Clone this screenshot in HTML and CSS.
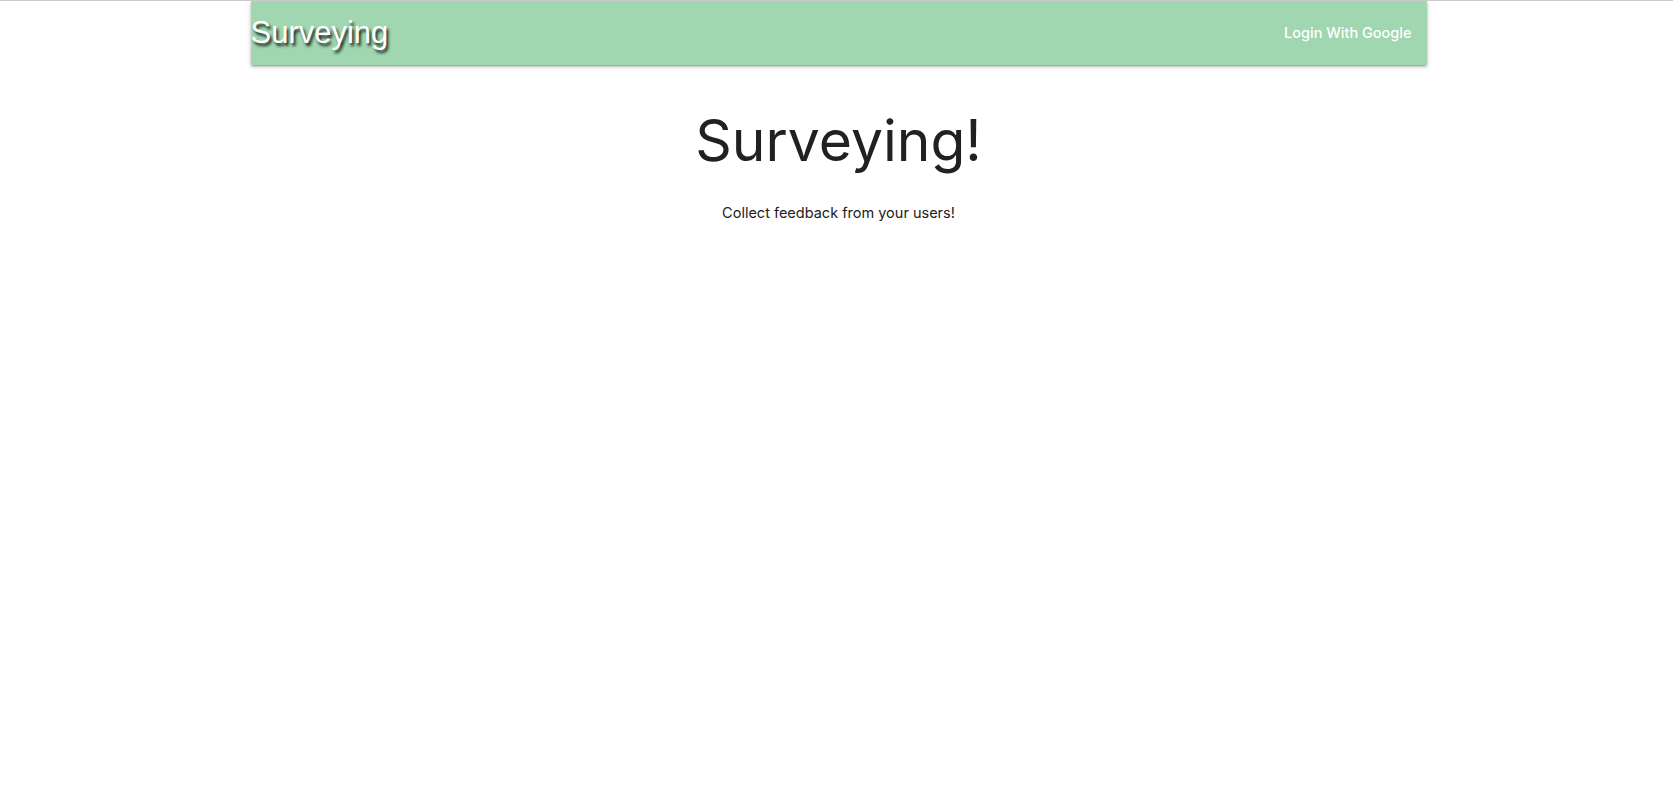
FILE: index.html
```html
<!DOCTYPE html>
<html lang="en">
<head>
<meta charset="utf-8">
<title>Surveying</title>
<link rel="stylesheet" href="styles.css">
</head>
<body>
<div class="page">
  <header class="container">
    <nav class="nav">
      <a class="brand" href="#">Surveying</a>
      <ul class="nav-links">
        <li><a href="#">Login With Google</a></li>
      </ul>
    </nav>
  </header>
  <main class="container landing">
    <h1 class="title">Surveying!</h1>
    <p class="subtitle">Collect feedback from your users!</p>
  </main>
</div>
</body>
</html>
```

FILE: styles.css
```css
* { box-sizing: border-box; }
html, body { margin: 0; padding: 0; }
body {
  font-family: Inter, "Noto Sans", sans-serif;
  color: rgba(0, 0, 0, 0.87);
  background: #ffffff;
  border-top: 1px solid #c9c9c9;
  min-height: 798px;
}
.page {
  padding-left: 4px;
}
.container {
  width: 1176px;
  margin: 0 auto;
}
.nav {
  display: flex;
  align-items: center;
  justify-content: space-between;
  height: 64px;
  background: #a0d6b0;
  box-shadow: 0 2px 2px 0 rgba(0,0,0,0.14), 0 3px 1px -2px rgba(0,0,0,0.12), 0 1px 5px 0 rgba(0,0,0,0.2);
}
.brand {
  font-family: "Liberation Sans", Arial, sans-serif;
  font-size: 31px;
  color: #fff;
  text-decoration: none;
  text-shadow: 2px 3px 3px rgba(0,0,0,0.85);
  line-height: 64px;
}
.nav-links {
  list-style: none;
  margin: 0;
  padding: 0;
  display: flex;
}
.nav-links a {
  display: block;
  padding: 0 15px;
  color: #fff;
  text-decoration: none;
  font-size: 14.5px;
  font-weight: 500;
  line-height: 64px;
}
.landing {
  text-align: center;
}
.title {
  font-size: 57px;
  font-weight: 400;
  line-height: 1.1;
  margin: 45px 0 0;
  color: #212121;
}
.subtitle {
  font-size: 14.5px;
  margin: 31px 0 0;
  color: #212121;
}
```
